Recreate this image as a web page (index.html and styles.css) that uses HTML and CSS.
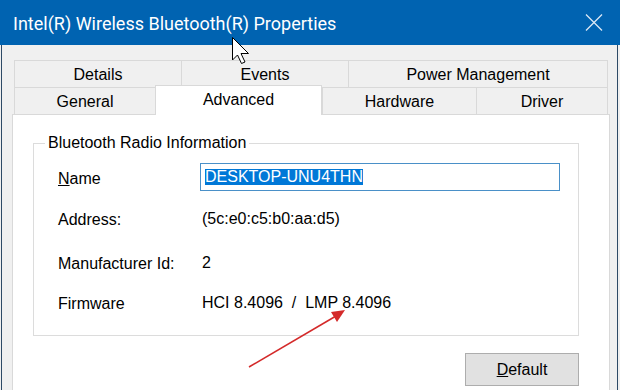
FILE: index.html
```html
<!DOCTYPE html>
<html>
<head>
    <title>Intel(R) Wireless Bluetooth(R) Properties</title>
    <meta charset="utf-8">
    <link rel="stylesheet" href="styles.css">
</head>
<body>
<div class="titlebar">
    <span class="title">Intel(R) Wireless Bluetooth(R) Properties</span>
    <svg class="close" width="18" height="17" viewBox="0 0 18 17">
        <path d="M1 0.5 L17 16.5 M17 0.5 L1 16.5" stroke="#dbe8f5" stroke-width="1.3" fill="none"/>
    </svg>
</div>

<div class="window">
    <div class="tabs row-top">
        <div class="tab">Details</div>
        <div class="tab">Events</div>
        <div class="tab last">Power Management</div>
    </div>
    <div class="tabs row-bottom">
        <div class="tab">General</div>
        <div class="tab selected">Advanced</div>
        <div class="tab">Hardware</div>
        <div class="tab last">Driver</div>
    </div>

    <div class="panel">
        <div class="panel-inner">
            <fieldset class="group">
                <legend>Bluetooth Radio Information</legend>
                <div class="props">
                    <div class="label"><u>N</u>ame</div>
                    <div class="textbox"><span class="sel">DESKTOP-UNU4THN</span></div>

                    <div class="label">Address:</div>
                    <div class="value">(5c:e0:c5:b0:aa:d5)</div>

                    <div class="label">Manufacturer Id:</div>
                    <div class="value">2</div>

                    <div class="label">Firmware</div>
                    <div class="value">HCI 8.4096 &nbsp;/&nbsp; LMP 8.4096</div>
                </div>
            </fieldset>
            <button class="btn"><u>D</u>efault</button>
        </div>
    </div>
</div>

<svg class="overlay" width="620" height="390" viewBox="0 0 620 390">
    <!-- annotation arrow -->
    <line x1="249" y1="367" x2="336" y2="316" stroke="#d42a2a" stroke-width="1.6"/>
    <polygon points="345,310 331,312 337,322" fill="#d42a2a"/>
    <!-- mouse pointer -->
    <path d="M232.5 37.5 L232.5 60 L237.5 55 L241.5 63.5 L245 62 L241 53.5 L248.5 53.5 Z"
          fill="#fff" stroke="#000" stroke-width="1" stroke-linejoin="round"/>
</svg>
</body>
</html>
```
FILE: styles.css
```css
body {
    margin: 0;
    width: 620px;
    height: 390px;
    overflow: hidden;
    background: #f0f0f0;
    font: 16px "Liberation Sans", Arial, sans-serif;
    color: #000;
    position: relative;
}

.titlebar {
    height: 45px;
    background: #0063b1;
    display: flex;
    align-items: center;
    justify-content: space-between;
    padding: 0 17px 0 13px;
}

.title {
    font: 18px Roboto, "Liberation Sans", sans-serif;
    color: #fff;
    padding-top: 1px;
}

.close {
    display: block;
}

.window {
    margin: 0 2px 0 1px;
    border-left: 1px solid #2e4a66;
    border-right: 1px solid #2e4a66;
    padding: 15px 7px 0 10px;
    height: 330px;
    overflow: hidden;
    background: #f0f0f0;
}

.tabs {
    display: grid;
    margin: 0 2px;
    height: 27px;
}

.row-top {
    grid-template-columns: 167px 167px 1fr;
}

.row-bottom {
    grid-template-columns: 141px 167px 154px 1fr;
}

.tab {
    border-left: 1px solid #d9d9d9;
    border-top: 1px solid #d9d9d9;
    background: #f0f0f0;
    display: flex;
    align-items: center;
    justify-content: center;
    height: 27px;
    box-sizing: border-box;
    padding-top: 1px;
}

.tab.last {
    border-right: 1px solid #d9d9d9;
}

.tab.selected {
    position: relative;
    z-index: 1;
    background: #fff;
    border-right: 1px solid #d9d9d9;
    height: 30px;
    margin: -2px 0 -1px;
    align-items: flex-start;
    padding-top: 5px;
}

.panel {
    background: #fff;
    border: 1px solid #d9d9d9;
    border-bottom: none;
    height: 275px;
}

.panel-inner {
    width: 546px;
    margin-left: 20px;
    padding-top: 19px;
    display: flex;
    flex-direction: column;
}

.group {
    margin: 0;
    border: 1px solid #dcdcdc;
    padding: 11px 0 10px 24px;
}

.group legend {
    margin-left: -13px;
    padding: 0 3px;
    line-height: 18px;
}

.props {
    display: grid;
    grid-template-columns: 142px 360px;
    grid-template-rows: 28px 54px 34px 46px;
    align-items: center;
}

.label {
    padding-top: 3px;
}

.value {
    padding-left: 2px;
    padding-top: 1px;
}

.textbox {
    height: 28px;
    box-sizing: border-box;
    border: 1px solid #4a90c8;
    padding-left: 4px;
    display: flex;
    align-items: center;
}

.sel {
    background: #0078d7;
    color: #fff;
    line-height: 16px;
}

.btn {
    align-self: flex-end;
    margin-top: 17px;
    width: 114px;
    height: 33px;
    background: #e1e1e1;
    border: 1px solid #adadad;
    font: 16px "Liberation Sans", Arial, sans-serif;
    color: #000;
    padding: 0;
}

.overlay {
    position: absolute;
    left: 0;
    top: 0;
    pointer-events: none;
}
```
